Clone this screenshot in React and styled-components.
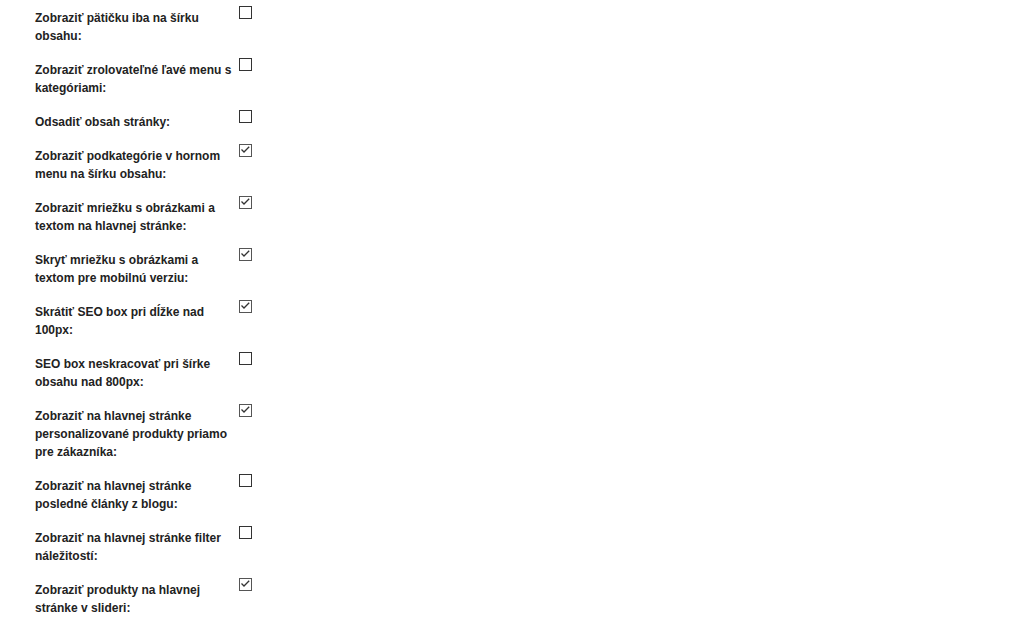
import React from 'react';
import styled, { createGlobalStyle } from 'styled-components';

const options = [
  { label: 'Zobraziť pätičku iba na šírku obsahu:', checked: false },
  { label: 'Zobraziť zrolovateľné ľavé menu s kategóriami:', checked: false },
  { label: 'Odsadiť obsah stránky:', checked: false },
  { label: 'Zobraziť podkategórie v hornom menu na šírku obsahu:', checked: true },
  { label: 'Zobraziť mriežku s obrázkami a textom na hlavnej stránke:', checked: true },
  { label: 'Skryť mriežku s obrázkami a textom pre mobilnú verziu:', checked: true },
  { label: 'Skrátiť SEO box pri dĺžke nad 100px:', checked: true },
  { label: 'SEO box neskracovať pri šírke obsahu nad 800px:', checked: false },
  { label: 'Zobraziť na hlavnej stránke personalizované produkty priamo pre zákazníka:', checked: true },
  { label: 'Zobraziť na hlavnej stránke posledné články z blogu:', checked: false },
  { label: 'Zobraziť na hlavnej stránke filter náležitostí:', checked: false },
  { label: 'Zobraziť produkty na hlavnej stránke v slideri:', checked: true },
];

export default function App() {
  return (
    <>
      <GlobalStyle />
      <Settings>
        {options.map((o, i) => (
          <Row key={i}>
            <Label>{o.label}</Label>
            <Box checked={o.checked}>
              {o.checked && (
                <svg width="11" height="11" viewBox="0 0 11 11">
                  <path d="M1.5 4.5 L4 7 L9.2 1.8" fill="none" stroke="#333" strokeWidth="1.3" />
                </svg>
              )}
            </Box>
          </Row>
        ))}
      </Settings>
    </>
  );
}

const GlobalStyle = createGlobalStyle`
  body {
    margin: 0;
    background: #fff;
    font-family: "Liberation Sans", Arial, sans-serif;
  }
`;

const Settings = styled.div`
  display: flex;
  flex-direction: column;
  gap: 12px;
  padding: 6px 0 0 35px;
`;

const Row = styled.div`
  display: flex;
  align-items: flex-start;
`;

const Label = styled.div`
  width: 200px;
  padding-top: 3px;
  padding-bottom: 1px;
  font-size: 12px;
  font-weight: bold;
  line-height: 18px;
  color: #222;
`;

const Box = styled.span`
  box-sizing: border-box;
  display: flex;
  align-items: center;
  justify-content: center;
  width: 13px;
  height: 13px;
  margin-left: 4px;
  border: 1px solid ${p => (p.checked ? '#555' : '#333')};
  background: #fff;
`;
